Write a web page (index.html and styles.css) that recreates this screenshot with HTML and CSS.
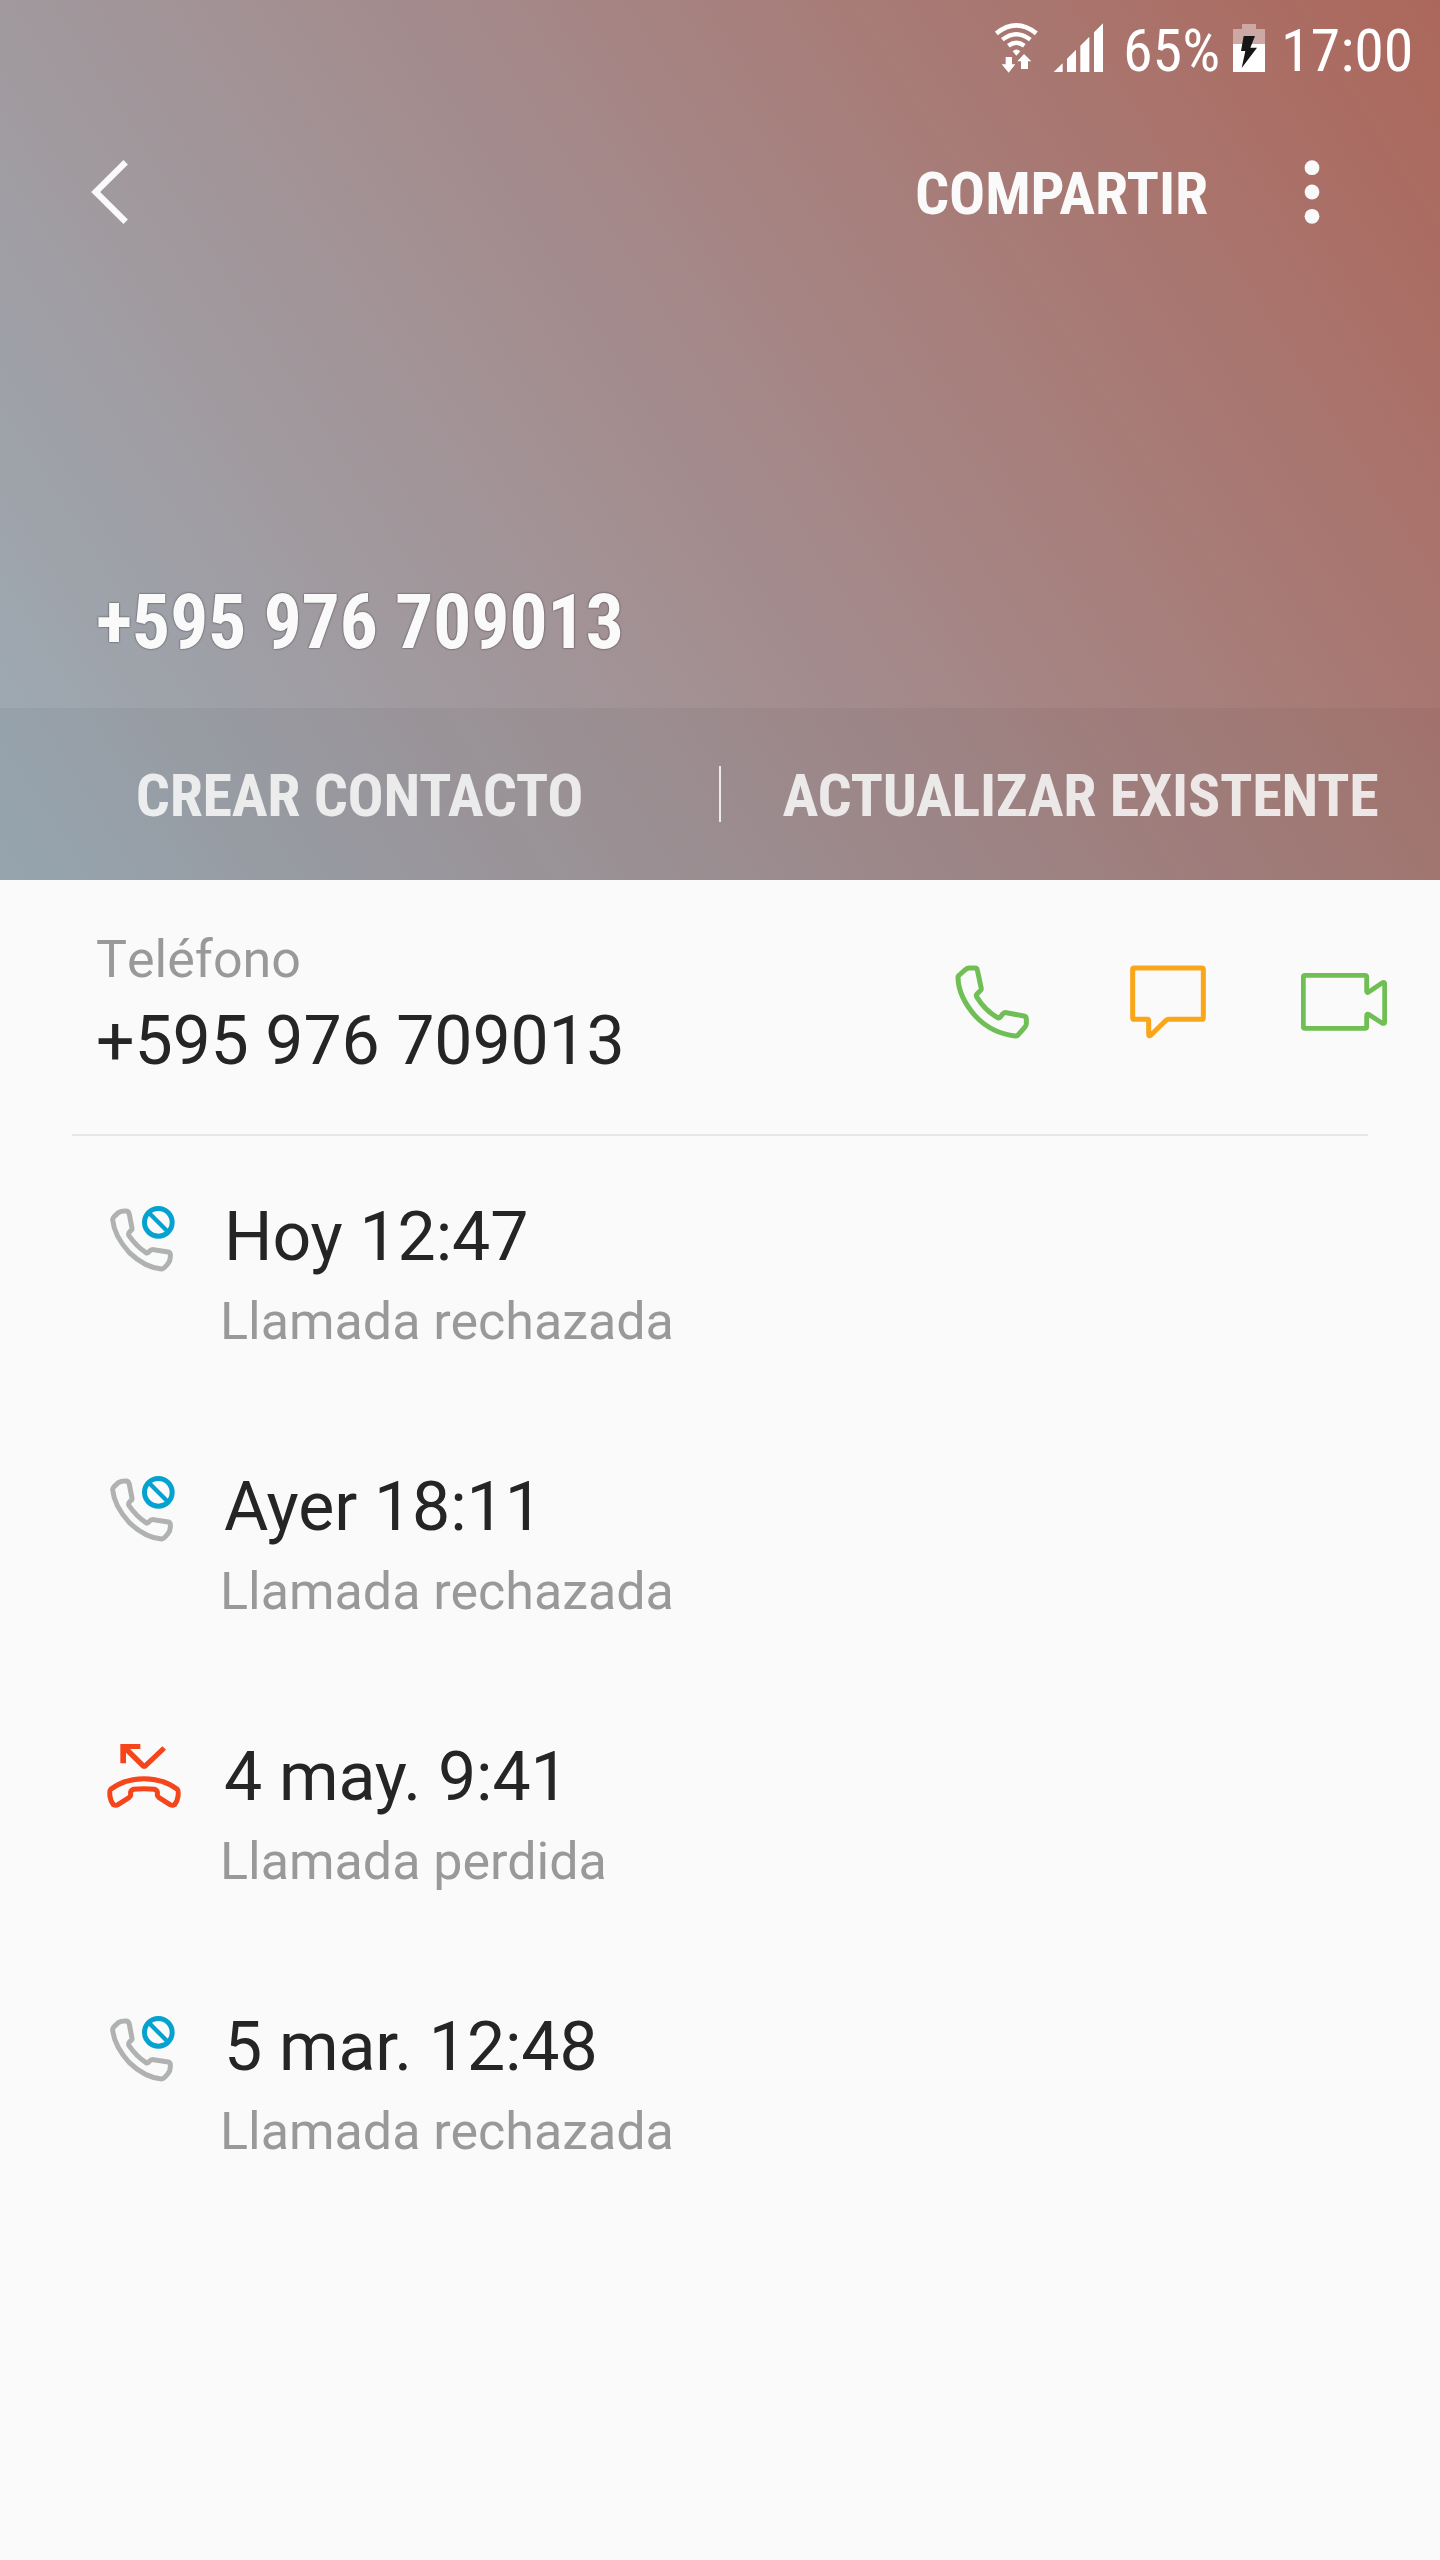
FILE: index.html
```html
<!DOCTYPE html>
<html lang="es">
<head>
    <meta charset="UTF-8">
    <meta name="viewport" content="width=device-width, initial-scale=1.0">
    <title>Detalles de llamada</title>
    <link rel="stylesheet" href="styles.css">
</head>
<body>
    <!-- iconos compartidos del registro -->
    <svg class="defs" width="0" height="0">
        <symbol id="rejected" viewBox="60 45 195 204">
            <path d="M68 89 Q66 87 73 79 L85 68 Q94 62 109 63 Q116 64 118 73 L126 115 Q127 120 119 125 Q114 130 117 137 Q140 170 168 188 Q172 191 178 184 Q183 178 191 179 L235 186 Q242 188 241 198 Q242 211 233 222 Q221 237 215 237 Q165 233 118 188 Q72 137 68 89Z" fill="none" stroke="#b0b2b2" stroke-width="15" stroke-linejoin="round"/>
            <circle cx="205" cy="97" r="41.500" fill="#fafafa" stroke="#05a1cf" stroke-width="15"/>
            <path d="M175 67 L235 127" fill="none" stroke="#05a1cf" stroke-width="13"/>
        </symbol>
        <symbol id="missed" viewBox="51 69 222 198">
            <path d="M91 72 H151 V87 H120 L163 130 L217 79 L228 89 L171 143 Q163 150 154 143 L108 98 V130 H91Z" fill="#f4451b"/>
            <path d="M62 208 Q104 176 162 176 Q220 176 262 208 Q266 212 264 230 Q262 244 254 254 Q247 258 240 254 L206 232 Q201 229 202 222 Q204 212 194 208 Q162 204 130 208 Q120 212 122 222 Q123 229 118 232 L84 254 Q77 258 70 254 Q62 244 60 230 Q58 212 62 208Z" fill="none" stroke="#f4451b" stroke-width="15" stroke-linejoin="round"/>
        </symbol>
    </svg>

    <header class="hero">
        <div class="status-bar">
            <svg class="wifi" viewBox="45 66 132 153" fill="none" stroke="#fff" stroke-width="14">
                <path d="M49 100 Q109 52 169 100"/>
                <path d="M67 119 Q109 86 151 119" stroke-width="13"/>
                <path d="M85 137 Q109 119 133 137" stroke-width="13"/>
                <path d="M98 154 Q109 143 121 154 L109 167Z M77 171 H96 V193 H106 L86 218 L65 193 H77Z M132 162 L154 184 H144 V207 H123 V184 H112Z" fill="#fff" stroke="none"/>
            </svg>
            <svg class="signal" viewBox="219 66 153 153" fill="#fff">
                <path d="M221 216 L248 190 V216Z M261 216 V176 L288 149 V216Z M301 216 V137 L328 110 V216Z M342 216 V97 L369 70 V216Z"/>
            </svg>
            <span class="battery-level">65%</span>
            <svg class="battery" viewBox="759 66 96 153">
                <path d="M786 72 H828 V87 H855 V132 H759 V87 H786Z" fill="#cda9a5"/>
                <path d="M759 132 H855 V216 H759Z" fill="#fff"/>
                <path d="M791 108 H825 L811 143 H831 L785 204 L796 153 H783Z" fill="#161616"/>
            </svg>
            <span class="clock">17:00</span>
        </div>

        <div class="toolbar">
            <svg class="back" viewBox="90 87 117 198">
                <path d="M197 97 L107 186 L197 275" fill="none" stroke="#fafafa" stroke-width="19"/>
            </svg>
            <span class="share">COMPARTIR</span>
            <svg class="more" viewBox="0 0 16 66" fill="#fafafa">
                <circle cx="8" cy="8.700" r="7.400"/>
                <circle cx="8" cy="33" r="7.400"/>
                <circle cx="8" cy="57.300" r="7.400"/>
            </svg>
        </div>

        <h1 class="title">+595 976 709013</h1>

        <div class="actions">
            <div class="action">CREAR CONTACTO</div>
            <div class="divider"></div>
            <div class="action">ACTUALIZAR EXISTENTE</div>
        </div>
    </header>

    <section class="phone">
        <div class="phone-text">
            <div class="label">Teléfono</div>
            <div class="number">+595 976 709013</div>
        </div>
        <div class="phone-icons">
            <svg class="icon-call" viewBox="75 72 225 228">
                <path d="M84 112 Q83 109 88 105 L106 89 Q111 84 118 84 H134 Q141 84 142 90 L154 146 Q155 149 149 154 L141 162 Q137 166 141 172 Q166 212 203 233 Q207 235 211 231 L219 221 Q223 217 229 218 L282 228 Q289 230 289 238 V252 Q289 256 284 262 L265 284 Q261 289 256 288 Q185 280 137 229 Q85 170 84 112Z" fill="none" stroke="#6fbf54" stroke-width="15" stroke-linejoin="round"/>
            </svg>
            <svg class="icon-message" viewBox="600 72 228 228">
                <path d="M613 84 H815 Q820 84 820 89 V233 Q820 238 815 238 H717 Q712 238 708 241 L663 285 Q656 291 656 283 V242 Q656 238 652 238 H613 Q608 238 608 233 V89 Q608 84 613 84Z" fill="none" stroke="#faa61a" stroke-width="15"/>
            </svg>
            <svg class="icon-video" viewBox="1113 72 258 228">
                <path d="M1125 106 H1305 Q1310 106 1310 111 V154 Q1310 160 1316 156 L1356 129 Q1364 124 1364 132 V245 Q1364 253 1356 249 L1317 224 Q1310 220 1310 227 V260 Q1310 265 1305 265 H1125 Q1120 265 1120 260 V111 Q1120 106 1125 106Z" fill="none" stroke="#6fbf54" stroke-width="14.500"/>
            </svg>
        </div>
    </section>

    <ul class="log">
        <li class="entry">
            <svg class="icon rejected"><use href="#rejected"/></svg>
            <div>
                <div class="time">Hoy 12:47</div>
                <div class="type">Llamada rechazada</div>
            </div>
        </li>
        <li class="entry">
            <svg class="icon rejected"><use href="#rejected"/></svg>
            <div>
                <div class="time">Ayer 18:11</div>
                <div class="type">Llamada rechazada</div>
            </div>
        </li>
        <li class="entry">
            <svg class="icon missed"><use href="#missed"/></svg>
            <div>
                <div class="time">4 may. 9:41</div>
                <div class="type">Llamada perdida</div>
            </div>
        </li>
        <li class="entry">
            <svg class="icon rejected"><use href="#rejected"/></svg>
            <div>
                <div class="time">5 mar. 12:48</div>
                <div class="type">Llamada rechazada</div>
            </div>
        </li>
    </ul>
</body>
</html>
```
FILE: styles.css
```css
* {
    box-sizing: border-box;
}

body {
    margin: 0;
    min-height: 2560px;
    background: #fafafa;
    color: #252525;
    font-family: Roboto, "Liberation Sans", sans-serif;
}

svg {
    display: block;
    flex: none;
}

.defs {
    position: absolute;
}

/* cabecera */
.hero {
    display: flex;
    flex-direction: column;
    height: 880px;
    color: #fafafa;
    font-family: "Roboto Condensed", Roboto, sans-serif;
    font-stretch: 75%;
    white-space: nowrap;
    background: linear-gradient(57.5deg, #9cacb6, #a48a8b 50%, #ac675b);
}

.status-bar {
    display: flex;
    height: 96px;
    padding-top: 22px;
    padding-left: 995px;
    color: #fff;
    font-size: 60px;
    line-height: 57px;
}

.wifi {
    width: 44px;
    height: 51px;
}

.signal {
    width: 51px;
    height: 51px;
    margin-left: 14px;
}

.battery-level {
    width: 107px;
    margin-left: 19px;
}

.battery {
    width: 32px;
    height: 51px;
    margin-left: 3px;
}

.clock {
    margin-left: 16px;
}

.toolbar {
    display: flex;
    align-items: center;
    height: 192px;
    padding: 0 120px 0 90px;
}

.back {
    width: 39px;
    height: 66px;
}

.share {
    margin-left: auto;
    padding-top: 3px;
    font-size: 60px;
    font-weight: bold;
    line-height: 64px;
    letter-spacing: -0.15px;
}

.more {
    width: 16px;
    height: 66px;
    margin-left: 96px;
}

.title {
    margin: auto 0 41px 96px;
    font-size: 76px;
    font-weight: bold;
    line-height: 90px;
    letter-spacing: -0.3px;
    text-shadow: 0 0 2px rgba(0, 0, 0, 0.7);
}

.actions {
    display: flex;
    align-items: center;
    height: 172px;
    background: rgba(0, 0, 0, 0.04);
}

.action {
    flex: 1;
    padding-top: 3px;
    color: rgba(250, 250, 250, 0.85);
    font-size: 60px;
    font-weight: bold;
    letter-spacing: -0.3px;
    text-align: center;
}

.divider {
    width: 2px;
    height: 56px;
    background: rgba(250, 250, 250, 0.85);
}

/* telefono */
.phone {
    display: flex;
    justify-content: space-between;
    height: 256px;
    margin: 0 72px;
    padding-left: 24px;
    border-bottom: 2px solid #e6e6e6;
}

.phone-text {
    padding-top: 50px;
}

.label {
    color: #999;
    font-size: 52px;
    line-height: 60px;
    font-kerning: none;
}

.number {
    margin-top: 11px;
    font-size: 68px;
    line-height: 80px;
    letter-spacing: -0.15px;
}

.phone-icons {
    display: flex;
    margin-right: -19px;
    padding-top: 84px;
}

.icon-call {
    width: 75px;
    height: 76px;
}

.icon-message {
    width: 76px;
    height: 76px;
    margin-left: 100px;
}

.icon-video {
    width: 86px;
    height: 76px;
    margin-left: 95px;
}

/* registro de llamadas */
.log {
    margin: 0;
    padding: 61px 0 0 107px;
    list-style: none;
}

.entry {
    display: grid;
    grid-template-columns: 113px 1fr;
    height: 270px;
}

.rejected {
    width: 65px;
    height: 68px;
    margin: 8px 0 0 3px;
}

.missed {
    width: 74px;
    height: 66px;
    margin-top: 6px;
}

.time {
    padding-left: 4px;
    font-size: 68px;
    line-height: 80px;
    letter-spacing: -0.1px;
}

.type {
    margin-top: 15px;
    color: #999;
    font-size: 52px;
    line-height: 60px;
}
```
